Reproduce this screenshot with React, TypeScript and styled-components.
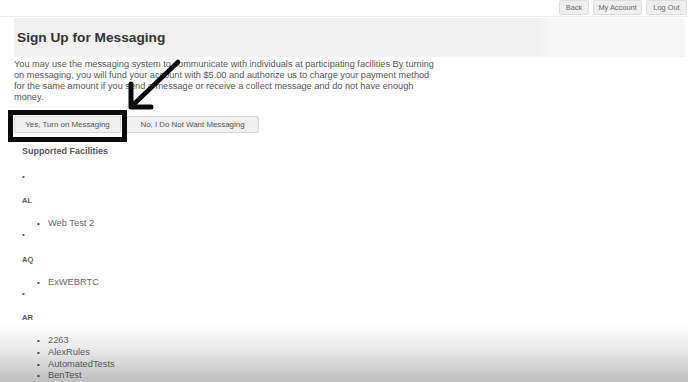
import React from "react";
import styled, {createGlobalStyle} from "styled-components";

const GlobalStyle = createGlobalStyle`
    html, body {
        margin: 0;
        padding: 0;
        background: #fff;
        font-family: "Liberation Sans", Arial, sans-serif;
        color: #555;
    }
`

const facilities = [
    {state: 'AL', names: ['Web Test 2']},
    {state: 'AQ', names: ['ExWEBRTC']},
    {state: 'AR', names: ['2263', 'AlexRules', 'AutomatedTests', 'BenTest']},
]

const Page = styled.div`
    position: relative;
    width: 688px;
    height: 382px;
    overflow: hidden;
`
const TopBar = styled.div`
    display: flex;
    justify-content: flex-end;
    gap: 4px;
    height: 17px;
    padding-right: 1px;
    box-sizing: border-box;
    border-bottom: 1px solid #ececec;
`
const TopButton = styled.button<{ $w: number }>`
    width: ${p => p.$w}px;
    height: 15px;
    padding: 0;
    font-family: inherit;
    font-size: 7.4px;
    color: #666;
    background: #eeeeee;
    border: 1px solid #dedede;
    border-radius: 2px;
`
const Content = styled.div`
    padding: 1px 3px 0 14px;
`
const Header = styled.div`
    height: 38px;
    display: flex;
    align-items: center;
    padding-left: 3px;
    background: linear-gradient(to right, #f0f0f0 0%, #f1f1f1 78%, #f7f7f7 80%, #f7f7f7 100%);
    border-bottom: 1px solid #f3f3f3;
`
const Title = styled.h1`
    margin: 0;
    font-size: 13.7px;
    font-weight: bold;
    color: #333;
`
const Intro = styled.p`
    width: 426px;
    margin: 2px 0 0;
    font-size: 9.2px;
    line-height: 10.9px;
    color: #555;
`
const ButtonRow = styled.div`
    display: flex;
    gap: 5px;
    margin-top: 13px;
`
const ChoiceButton = styled.button<{ $w: number }>`
    width: ${p => p.$w}px;
    height: 17px;
    padding: 0;
    font-family: inherit;
    font-size: 7.9px;
    color: #555;
    background: #efefef;
    border: 1px solid #d6d6d6;
    border-radius: 2px;
`
const Facilities = styled.div`
    padding-left: 8px;
    margin-top: 13px;
`
const SubTitle = styled.h3`
    margin: 0;
    font-size: 9px;
    font-weight: bold;
    line-height: 11px;
    color: #555;
`
const List = styled.ul`
    margin: 0;
    padding: 0;
    list-style: none;
    font-size: 9.3px;
    line-height: 11.6px;
`
const Item = styled.li`
    margin: 0;
`
const Dot = styled.span<{ $first?: boolean }>`
    display: block;
    height: 11.6px;
    margin-top: ${p => p.$first ? 14 : 0}px;
    &::before {
        content: "•";
        font-size: 8px;
    }
`
const State = styled.h5`
    margin: 12.5px 0 11.5px;
    font-size: 7.6px;
    line-height: 11.6px;
    font-weight: bold;
    color: #5a5a5a;
`
const Nested = styled.ul`
    margin: 0;
    padding-left: 15px;
    list-style: none;
`
const NestedItem = styled.li`
    display: flex;
    gap: 5px;
    color: #666;
    &::before {
        content: "•";
        width: 6px;
        font-size: 8px;
        color: #444;
    }
`
const Annotation = styled.svg`
    position: absolute;
    left: 0;
    top: 0;
    pointer-events: none;
`
const Shade = styled.div`
    position: absolute;
    left: 0;
    right: 0;
    bottom: 0;
    height: 58px;
    pointer-events: none;
    background: linear-gradient(to bottom, rgba(0, 0, 0, 0) 0%, rgba(0, 0, 0, 0.08) 40%, rgba(0, 0, 0, 0.25) 100%);
`

const App = () => {
    return <>
        <GlobalStyle/>
        <Page>
            <TopBar>
                <TopButton $w={30}>Back</TopButton>
                <TopButton $w={49}>My Account</TopButton>
                <TopButton $w={41}>Log Out</TopButton>
            </TopBar>
            <Content>
                <Header><Title>Sign Up for Messaging</Title></Header>
                <Intro>
                    You may use the messaging system to communicate with individuals at participating facilities By turning
                    on messaging, you will fund your account with $5.00 and authorize us to charge your payment method
                    for the same amount if you send a message or receive a collect message and do not have enough
                    money.
                </Intro>
                <ButtonRow>
                    <ChoiceButton $w={107}>Yes, Turn on Messaging</ChoiceButton>
                    <ChoiceButton $w={133}>No, I Do Not Want Messaging</ChoiceButton>
                </ButtonRow>
                <Facilities>
                    <SubTitle>Supported Facilities</SubTitle>
                    <List>
                        {facilities.map((f, i) => <Item key={f.state}>
                            <Dot $first={i === 0}/>
                            <State>{f.state}</State>
                            <Nested>
                                {f.names.map(n => <NestedItem key={n}>{n}</NestedItem>)}
                            </Nested>
                        </Item>)}
                    </List>
                </Facilities>
            </Content>
            <Annotation width="688" height="382" viewBox="0 0 688 382">
                <rect x="10.5" y="112.5" width="114" height="27" fill="none" stroke="#0a0a0a" strokeWidth="5"/>
                <line x1="178" y1="62" x2="134" y2="104" stroke="#0a0a0a" strokeWidth="4.5" strokeLinecap="round"/>
                <polyline points="131,84 131,107 151,107" fill="none" stroke="#0a0a0a" strokeWidth="5"
                          strokeLinecap="round" strokeLinejoin="round"/>
            </Annotation>
            <Shade/>
        </Page>
    </>
};

export default App;
